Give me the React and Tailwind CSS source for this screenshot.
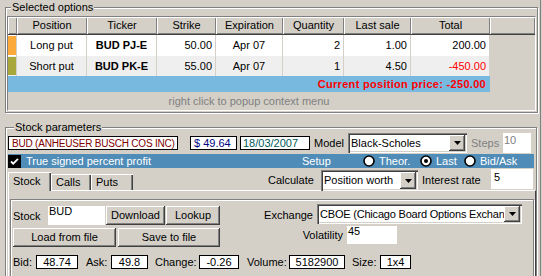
import React from "react";

// win2000 style bevels
const raised = "bg-[#d4d0c8] shadow-[inset_-1px_-1px_0_#404040,inset_1px_1px_0_#ffffff,inset_-2px_-2px_0_#808080]";
const sunken = "shadow-[inset_1px_1px_0_#808080,inset_2px_2px_0_#404040,inset_-1px_-1px_0_#ffffff,inset_-2px_-2px_0_#d4d0c8]";
const etched = "border border-[#808080] shadow-[inset_1px_1px_0_#ffffff,1px_1px_0_#ffffff]";
const headCell = "shadow-[inset_1px_1px_0_#ffffff,inset_-1px_-1px_0_#808080]";
const tabEdge = "shadow-[inset_1px_1px_0_#ffffff,inset_-1px_0_0_#404040,inset_-2px_0_0_#808080]";

const columns = [
  { label: "Position", w: "w-[70px]", key: "pos", align: "justify-center" },
  { label: "Ticker", w: "w-[70px]", key: "ticker", align: "justify-center font-bold" },
  { label: "Strike", w: "w-[59px]", key: "strike", align: "justify-end pr-[3px]" },
  { label: "Expiration", w: "w-[67px]", key: "exp", align: "justify-center" },
  { label: "Quantity", w: "w-[61px]", key: "qty", align: "justify-end pr-[3px]" },
  { label: "Last sale", w: "w-[67px]", key: "last", align: "justify-end pr-[3px]" },
  { label: "Total", w: "w-[79px]", key: "total", align: "justify-end pr-[3px]" },
];

const options = [
  { color: "bg-[#fcaa3a]", bg: "bg-white", h: "h-[21px]", pos: "Long put", ticker: "BUD PJ-E", strike: "50.00", exp: "Apr 07", qty: "2", last: "1.00", total: "200.00" },
  { color: "bg-[#a8a83a]", bg: "bg-[#efefef]", h: "h-[20px]", pos: "Short put", ticker: "BUD PK-E", strike: "55.00", exp: "Apr 07", qty: "1", last: "4.50", total: "-450.00" },
];

const DownArrow = () => (
  <svg width="7" height="4" viewBox="0 0 7 4">
    <path d="M0 0h7L3.5 4z" fill="#000" />
  </svg>
);

function Combo({ className, text }) {
  return (
    <div className={`flex bg-white p-[2px] ${sunken} ${className}`}>
      <div className="flex-1 flex items-center pl-[1px] overflow-hidden whitespace-nowrap">{text}</div>
      <div className={`w-[16px] flex items-center justify-center ${raised}`}>
        <DownArrow />
      </div>
    </div>
  );
}

const Radio = ({ on }) => (
  <svg width="12" height="12" viewBox="0 0 12 12">
    <circle cx="6" cy="6" r="5" fill="#fff" stroke="#000" strokeWidth="1.6" />
    {on && <circle cx="6" cy="6" r="2" fill="#000" />}
  </svg>
);

const Btn = ({ className, children }) => (
  <div className={`flex items-center justify-center ${raised} ${className}`}>{children}</div>
);

const Box = ({ className, children }) => (
  <div className={`h-[14px] border border-black bg-white flex items-center justify-center whitespace-nowrap overflow-hidden ${className}`}>
    {children}
  </div>
);

export default function App() {
  return (
    <div className="w-[542px] h-[276px] overflow-hidden bg-[#d4d0c8] flex font-['Liberation_Sans',Arial,sans-serif] text-[11px] leading-[13px] text-black">
      <div className="w-[540px] flex flex-col">
        {/* Selected options */}
        <div className={`relative mt-[7px] ml-[5px] w-[533px] h-[106px] shrink-0 ${etched}`}>
          <span className="absolute left-[5px] -top-[7px] px-[1px] bg-[#d4d0c8]">Selected options</span>
          <div className="ml-[1px] mt-[8px] w-[529px] h-[95px] flex flex-col border border-t-[#808080] border-l-[#808080] border-r-white border-b-white">
            <div className="flex h-[18px] border-b border-[#404040]">
              <div className={`w-[9px] ${headCell}`} />
              {columns.map((c) => (
                <div key={c.key} className={`${c.w} flex items-center justify-center ${headCell}`}>
                  {c.label}
                </div>
              ))}
              <div className={`flex-1 ${headCell}`} />
            </div>
            {options.map((o) => (
              <div key={o.ticker} className={`flex ${o.h}`}>
                <div className={`w-[482px] flex ${o.bg}`}>
                  <div className="w-[9px] py-[1px] border-r border-[#d4d0c8]">
                    <div className={`h-full ${o.color}`} />
                  </div>
                  {columns.map((c) => (
                    <div
                      key={c.key}
                      className={`${c.w} flex items-center border-r border-[#d4d0c8] ${c.align} ${
                        c.key === "total" && o.total.startsWith("-") ? "text-[#ff0000]" : ""
                      }`}
                    >
                      {o[c.key]}
                    </div>
                  ))}
                </div>
              </div>
            ))}
            <div className="w-[482px] h-[16px] bg-[#78b9e0] flex items-center justify-end pr-[4px] font-bold tracking-[0.3px] text-[#ff0000]">
              Current position price: -250.00
            </div>
            <div className="w-[482px] h-[18px] flex items-center justify-center text-[#808080]">
              right click to popup context menu
            </div>
          </div>
        </div>

        {/* Stock parameters */}
        <div className={`relative mt-[14px] ml-[5px] w-[532px] h-[170px] shrink-0 ${etched}`}>
          <span className="absolute left-[8px] -top-[7px] px-[1px] bg-[#d4d0c8]">Stock parameters</span>

          <div className="mt-[5px] pl-[2px] h-[20px] flex items-center">
            <Box className="w-[170px] !justify-start pl-[3px] text-[10px] tracking-[-0.2px] text-[#800000]">
              BUD (ANHEUSER BUSCH COS INC)
            </Box>
            <Box className="ml-[12px] w-[47px] !justify-start pl-[3px] text-[#000080]">$ 49.64</Box>
            <Box className="ml-[3px] w-[70px] !justify-start pl-[2px] text-[#005a5a]">18/03/2007</Box>
            <span className="ml-[4px] w-[34px]">Model</span>
            <Combo className="w-[119px] h-[20px]" text="Black-Scholes" />
            <span className="ml-[4px] w-[32px] text-[#808080]">Steps</span>
            <div className="w-[28px] h-[20px] bg-white text-[#808080] pl-[1px] pt-[1px]">10</div>
          </div>

          <div className="mt-[1px] ml-[2px] w-[526px] h-[14px] bg-[#4f8cb7] flex items-center text-white">
            <div className="w-[294px] flex items-center">
              <div className="w-[13px] h-[13px] bg-black flex items-center justify-center">
                <svg width="9" height="9" viewBox="0 0 9 9">
                  <path d="M1 4.5l2.2 2.2L8 1.8" fill="none" stroke="#fff" strokeWidth="1.8" />
                </svg>
              </div>
              <span className="ml-[5px]">True signed percent profit</span>
            </div>
            <span className="w-[61px]">Setup</span>
            <div className="w-[57px] flex items-center gap-[4px]">
              <Radio />
              <span>Theor.</span>
            </div>
            <div className="w-[44px] flex items-center gap-[4px]">
              <Radio on />
              <span>Last</span>
            </div>
            <div className="flex items-center gap-[4px]">
              <Radio />
              <span>Bid/Ask</span>
            </div>
          </div>

          <div className="flex h-[22px] items-start">
            <div className="self-end ml-[2px] flex items-end">
              <div className={`relative z-10 -mb-[1px] w-[43px] h-[19px] pl-[5px] pt-[3px] bg-[#d4d0c8] ${tabEdge}`}>Stock</div>
              <div className={`w-[40px] h-[16px] pl-[5px] pt-[2px] ${tabEdge}`}>Calls</div>
              <div className={`w-[42px] h-[16px] pl-[5px] pt-[2px] ${tabEdge}`}>Puts</div>
            </div>
            <div className="ml-[135px] flex items-start">
              <span className="w-[53px] mt-[6px]">Calculate</span>
              <Combo className="w-[97px] h-[21px] mt-[2px]" text="Position worth" />
              <span className="ml-[4px] w-[69px] mt-[6px]">Interest rate</span>
              <div className="w-[42px] h-[20px] mt-[1px] bg-white pl-[3px] pt-[2px]">5</div>
            </div>
          </div>

          <div className="ml-[2px] w-[528px] h-[100px] border-t border-l border-white border-r border-r-[#404040]">
            <div className={`ml-[1px] mt-[8px] w-[524px] h-[90px] ${etched}`}>
              <div className="mt-[4px] h-[21px] flex items-start">
                <span className="ml-[2px] w-[35px] mt-[6px]">Stock</span>
                <div className="w-[57px] h-[19px] mt-[2px] bg-white pl-[1px] leading-[11px]">BUD</div>
                <Btn className="ml-[1px] w-[59px] h-[19px] mt-[2px]">Download</Btn>
                <Btn className="ml-[1px] w-[54px] h-[19px] mt-[2px]">Lookup</Btn>
                <span className="ml-[41px] w-[52px] mt-[5px] text-right">Exchange</span>
                <Combo className="ml-[4px] w-[205px] h-[20px] tracking-[-0.2px]" text="CBOE (Chicago Board Options Exchange)" />
              </div>
              <div className="h-[22px] flex items-start">
                <Btn className="ml-[2px] w-[103px] h-[19px] mt-[3px]">Load from file</Btn>
                <Btn className="ml-[2px] w-[102px] h-[19px] mt-[3px]">Save to file</Btn>
                <span className="w-[123px] mt-[4px] text-right">Volatility</span>
                <div className="ml-[4px] w-[50px] h-[18px] mt-[1px] bg-white pl-[1px] leading-[11px]">45</div>
              </div>
              <div className="mt-[8px] h-[14px] flex items-center">
                <span className="ml-[2px] w-[23px]">Bid:</span>
                <Box className="w-[42px]">48.74</Box>
                <span className="ml-[8px] w-[25px]">Ask:</span>
                <Box className="w-[37px]">49.8</Box>
                <span className="ml-[7px] w-[44px]">Change:</span>
                <Box className="w-[40px]">-0.26</Box>
                <span className="ml-[8px] w-[42px]">Volume:</span>
                <Box className="w-[56px]">5182900</Box>
                <span className="ml-[7px] w-[28px]">Size:</span>
                <Box className="w-[31px]">1x4</Box>
              </div>
            </div>
          </div>
        </div>
      </div>
      <div className="w-[2px] border-l border-[#808080]" />
    </div>
  );
}
